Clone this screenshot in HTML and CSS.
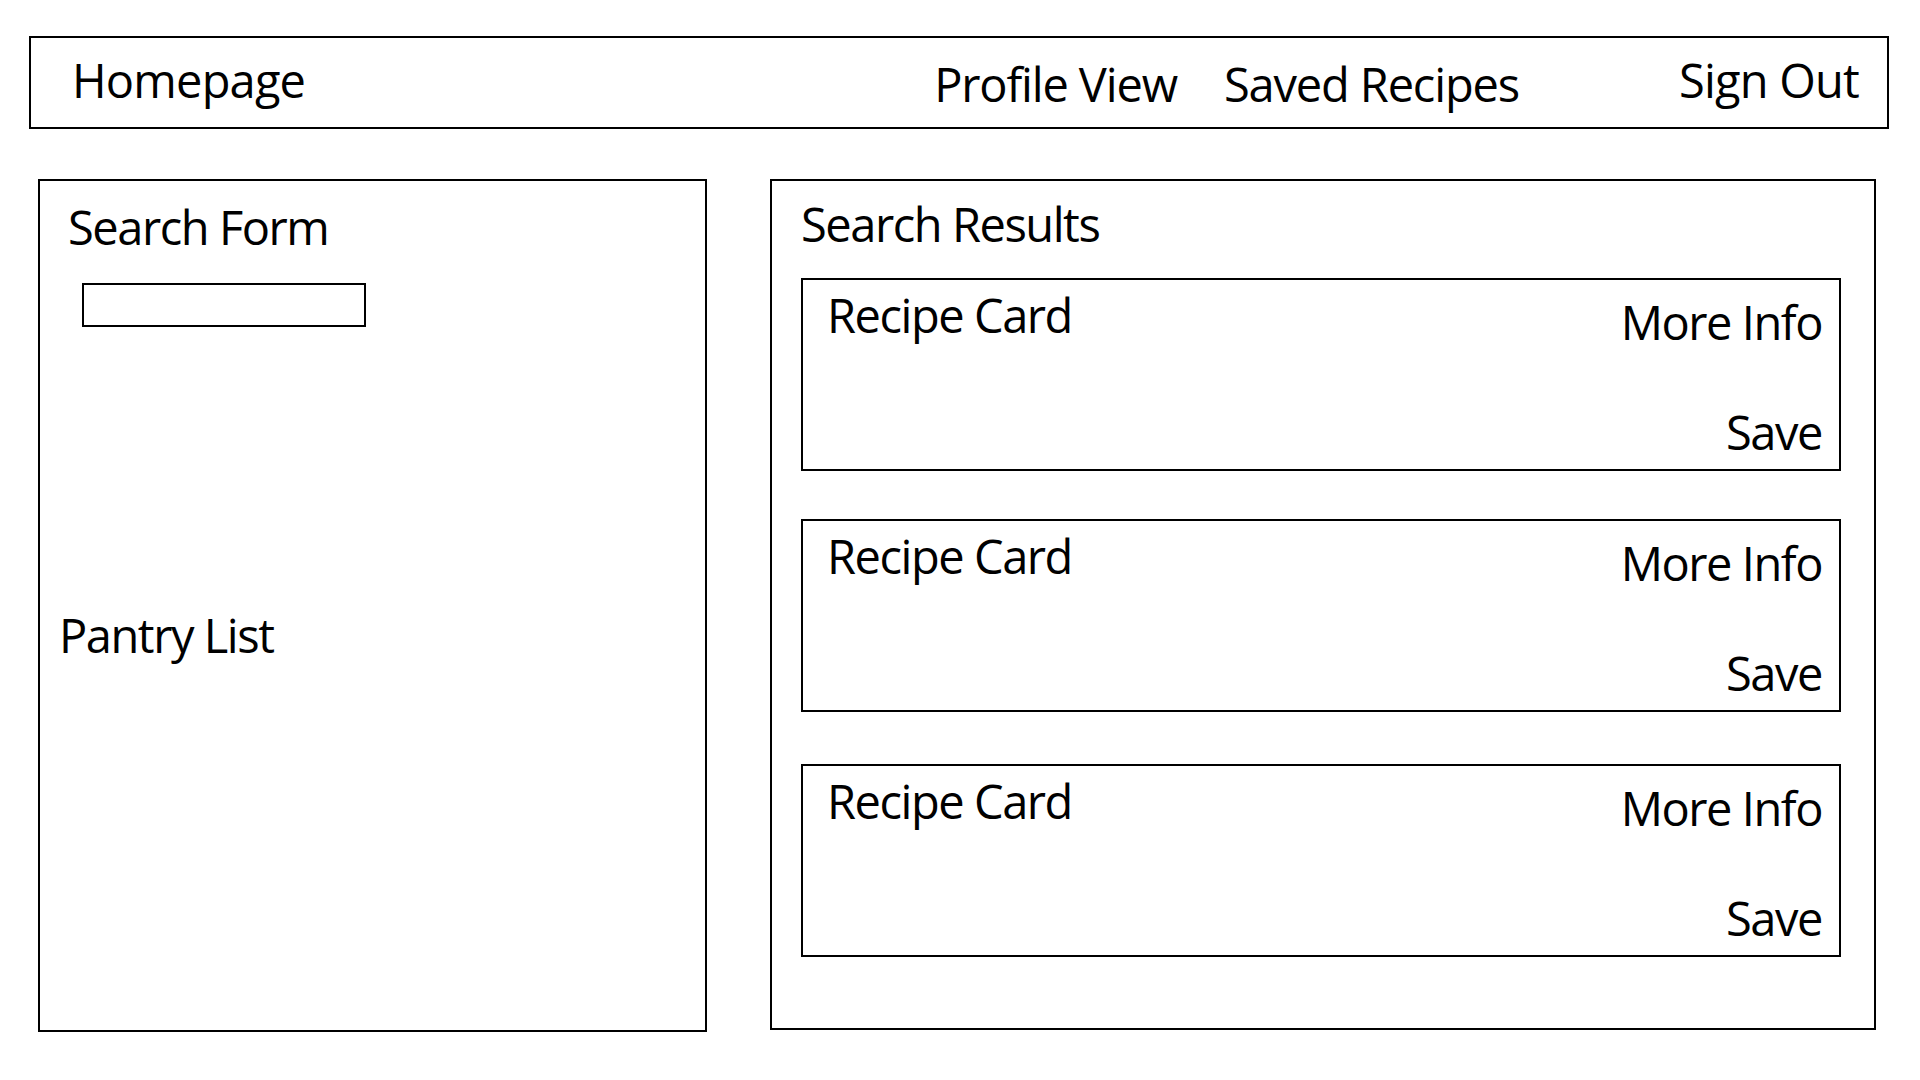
FILE: index.html
```html
<!DOCTYPE html>
<html lang="en">
<head>
<meta charset="utf-8">
<title>Homepage Wireframe</title>
<link rel="stylesheet" href="styles.css">
</head>
<body>
  <nav class="topnav">
    <span class="nav-item nav-home">Homepage</span>
    <span class="nav-item nav-mid nav-profile">Profile View</span>
    <span class="nav-item nav-mid nav-saved">Saved Recipes</span>
    <span class="nav-item nav-signout">Sign Out</span>
  </nav>
  <main class="layout">
    <section class="panel panel-left">
      <h2 class="panel-title">Search Form</h2>
      <div class="search-input"></div>
      <h2 class="panel-title pantry-title">Pantry List</h2>
    </section>
    <section class="panel panel-right">
      <h2 class="panel-title results-title">Search Results</h2>
      <div class="cards">
        <article class="card">
          <div class="card-title">Recipe Card</div>
          <div class="card-actions">
            <span class="card-link">More Info</span>
            <span class="card-link">Save</span>
          </div>
        </article>
        <article class="card">
          <div class="card-title">Recipe Card</div>
          <div class="card-actions">
            <span class="card-link">More Info</span>
            <span class="card-link">Save</span>
          </div>
        </article>
        <article class="card card-last">
          <div class="card-title">Recipe Card</div>
          <div class="card-actions">
            <span class="card-link">More Info</span>
            <span class="card-link">Save</span>
          </div>
        </article>
      </div>
    </section>
  </main>
</body>
</html>
```
FILE: styles.css
```css
* { box-sizing: border-box; }
html, body { margin: 0; padding: 0; background: #fff; }
body {
  font-family: "Open Sans", "Noto Sans", sans-serif;
  color: #000;
  width: 1920px;
  height: 1080px;
  overflow: hidden;
  padding: 36px 0 0 29px;
}
.topnav {
  width: 1860px;
  height: 93px;
  border: 2px solid #000;
  display: flex;
  align-items: flex-start;
  padding: 19px 28px 0 41px;
}
.nav-item {
  font-size: 47px;
  line-height: 47px;
  letter-spacing: -0.8px;
  white-space: nowrap;
}
.nav-mid {
  letter-spacing: -1.15px;
  margin-top: 4px;
}
.nav-profile { margin-left: auto; }
.nav-saved { margin-left: 47px; }
.nav-signout { margin-left: 160px; }

.layout {
  display: flex;
  align-items: flex-start;
  margin-top: 50px;
  margin-left: 9px;
}
.panel {
  border: 2px solid #000;
}
.panel-left {
  width: 669px;
  height: 853px;
  padding: 23px 20px 0 28px;
}
.panel-title {
  margin: 0;
  font-weight: 400;
  font-size: 47px;
  line-height: 47px;
  letter-spacing: -1.45px;
  white-space: nowrap;
}
.search-input {
  width: 284px;
  height: 44px;
  border: 2px solid #000;
  margin: 32px 0 0 14px;
}
.pantry-title {
  margin: 285px 0 0 -9px;
}
.panel-right {
  width: 1106px;
  height: 851px;
  margin-left: 63px;
  padding: 20px 33px 0 29px;
}
.cards {
  display: flex;
  flex-direction: column;
  gap: 48px;
  margin-top: 30px;
}
.card {
  width: 1040px;
  height: 193px;
  border: 2px solid #000;
  display: flex;
  justify-content: space-between;
  padding: 12px 17px 13px 24px;
}
.card-last {
  margin-top: 4px;
}
.card-title,
.card-link {
  font-size: 47px;
  line-height: 47px;
  letter-spacing: -1.45px;
  white-space: nowrap;
}
.card-actions {
  display: flex;
  flex-direction: column;
  justify-content: space-between;
  align-items: flex-end;
  padding-top: 7px;
}
```
